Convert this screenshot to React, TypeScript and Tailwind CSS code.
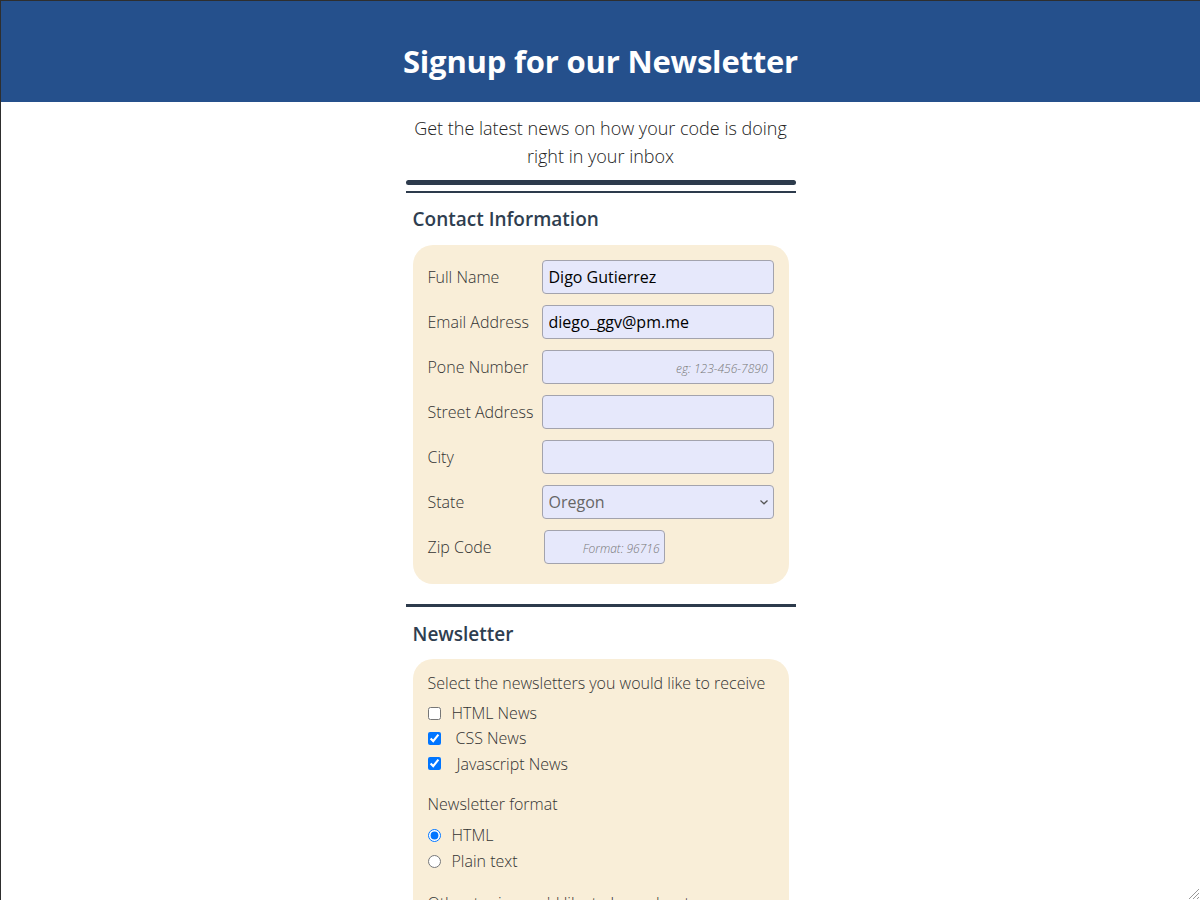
import { useState } from "react";

const font = { fontFamily: "'Open Sans', 'Noto Sans', sans-serif" };

function Field({ label, children }: { label: string; children: React.ReactNode }) {
  return (
    <div className="flex items-center">
      <label className="w-[114px] shrink-0 text-[16px] font-light text-[#333]">{label}</label>
      {children}
    </div>
  );
}

const boxCls =
  "h-[34px] rounded-[4px] border border-[#a3a3ad] bg-[#e6e8fb] px-[6px] text-[16px] outline-none placeholder:text-[12px] placeholder:italic placeholder:text-[#777] placeholder:font-light";

export default function App() {
  const [format, setFormat] = useState("html");
  return (
    <div className="min-h-screen border-l border-t border-[#2e2e2e] bg-white" style={font}>
      <header className="flex h-[101px] items-center justify-center bg-[#25508c] pt-[20px]">
        <h1 className="text-[31px] font-bold tracking-[-0.2px] text-white">Signup for our Newsletter</h1>
      </header>

      <main className="mx-auto w-[390px] pb-10">
        <p className="pt-[12px] text-center text-[18px] font-light leading-[28px] text-[#222]">
          Get the latest news on how your code is doing right in your inbox
        </p>
        <div className="mt-[10px] h-[5px] rounded-full bg-[#2d3b4c]" />
        <div className="mt-[6px] h-[2px] bg-[#2d3b4c]" />

        <section className="px-[7px]">
          <h2 className="mt-[12px] text-[19px] font-semibold leading-[28px] text-[#2f3e50]">Contact Information</h2>
          <div className="mt-[12px] flex flex-col gap-[11px] rounded-[20px] bg-[#f9eed8] px-[15px] pb-[20px] pt-[15px]">
            <Field label="Full Name">
              <input className={`${boxCls} w-[232px] text-black`} defaultValue="Digo Gutierrez" />
            </Field>
            <Field label="Email Address">
              <input className={`${boxCls} w-[232px] text-black`} defaultValue="diego_ggv@pm.me" />
            </Field>
            <Field label="Pone Number">
              <input className={`${boxCls} w-[232px] pr-[5px] text-right`} placeholder="eg: 123-456-7890" />
            </Field>
            <Field label="Street Address">
              <input className={`${boxCls} w-[232px]`} />
            </Field>
            <Field label="City">
              <input className={`${boxCls} w-[232px]`} />
            </Field>
            <Field label="State">
              <div className="relative">
                <select className={`${boxCls} w-[232px] appearance-none text-[#666]`} defaultValue="Oregon">
                  <option>Oregon</option>
                  <option>California</option>
                  <option>Washington</option>
                </select>
                <svg
                  className="pointer-events-none absolute right-[5px] top-[13px]"
                  width="10"
                  height="8"
                  viewBox="0 0 10 8"
                  fill="none"
                  stroke="#555"
                  strokeWidth="1.3"
                >
                  <path d="M1.5 2.5 L5 5.8 L8.5 2.5" />
                </svg>
              </div>
            </Field>
            <Field label="Zip Code">
              <input className={`${boxCls} ml-[2px] w-[121px] pr-[4px] text-right`} placeholder="Format: 96716" />
            </Field>
          </div>
        </section>

        <div className="mt-[20px] h-[3px] bg-[#2d3b4c]" />

        <section className="px-[7px]">
          <h2 className="mt-[13px] text-[19px] font-semibold leading-[28px] text-[#2f3e50]">Newsletter</h2>
          <div className="mt-[11px] rounded-[20px] bg-[#f9eed8] px-[15px] pb-[20px] pt-[14px] text-[16px] font-light text-[#333]">
            <p className="leading-[20px]">Select the newsletters you would like to receive</p>
            <div className="mt-[10px] flex flex-col gap-[5px]">
              <label className="flex h-[20px] items-center">
                <input type="checkbox" className="m-0 h-[13px] w-[13px]" />
                <span className="ml-[11px]">HTML News</span>
              </label>
              <label className="flex h-[20px] items-center">
                <input type="checkbox" defaultChecked className="m-0 h-[13px] w-[13px]" />
                <span className="ml-[15px]">CSS News</span>
              </label>
              <label className="flex h-[21px] items-center">
                <input type="checkbox" defaultChecked className="m-0 h-[13px] w-[13px]" />
                <span className="ml-[16px]">Javascript News</span>
              </label>
            </div>

            <p className="mt-[20px] leading-[20px]">Newsletter format</p>
            <div className="mt-[11px] flex flex-col gap-[6px]">
              <label className="flex h-[20px] items-center">
                <input
                  type="radio"
                  name="fmt"
                  checked={format === "html"}
                  onChange={() => setFormat("html")}
                  className="m-0 h-[13px] w-[13px]"
                />
                <span className="ml-[11px]">HTML</span>
              </label>
              <label className="flex h-[20px] items-center">
                <input
                  type="radio"
                  name="fmt"
                  checked={format === "plain"}
                  onChange={() => setFormat("plain")}
                  className="m-0 h-[13px] w-[13px]"
                />
                <span className="ml-[11px]">Plain text</span>
              </label>
            </div>

            <p className="mt-[22px] leading-[20px]">Other topics you'd like to hear about</p>
            <textarea className="mt-[8px] h-[80px] w-full rounded-[4px] border border-[#a3a3ad] bg-[#e6e8fb]" />
          </div>
        </section>
      </main>

      <svg className="pointer-events-none fixed bottom-0 right-0" width="14" height="14" viewBox="0 0 14 14" stroke="#999" strokeWidth="1">
        <path d="M13 3 L3 13 M13 7 L7 13 M13 11 L11 13" />
      </svg>
    </div>
  );
}
